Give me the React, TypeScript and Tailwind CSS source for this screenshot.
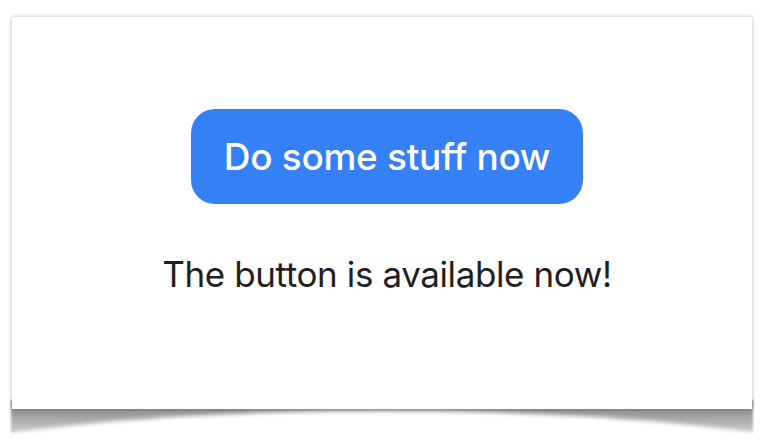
export default function App() {
  return (
    <div className="relative w-[767px] h-[447px] overflow-hidden bg-white font-['Inter',sans-serif]">
      {/* curled page shadow under the card */}
      <div className="absolute left-[11px] top-[400px] w-[742px] h-[34px] bg-gradient-to-b from-[#808080] via-[#a4a4a4] to-[#d4d4d4] blur-[1px]" />
      <div className="absolute left-[-116px] top-[411px] w-[1000px] h-[134px] rounded-[50%] bg-white blur-[2px]" />

      <div className="relative ml-[12px] mt-[17px] w-[740px] h-[392px] bg-white shadow-[0_0_4px_rgba(0,0,0,0.3)] flex flex-col items-center pt-[92px] pl-[10px]">
        <button className="w-[392px] h-[95px] rounded-[24px] bg-[#3680f6] text-white text-[37px] font-medium leading-[43px] tracking-[-0.3px]">
          Do some stuff now
        </button>
        <p className="mt-[49px] text-[35px] leading-[43px] text-[#1f1f1f] tracking-[-0.4px]">
          The button is available now!
        </p>
      </div>
    </div>
  );
}
